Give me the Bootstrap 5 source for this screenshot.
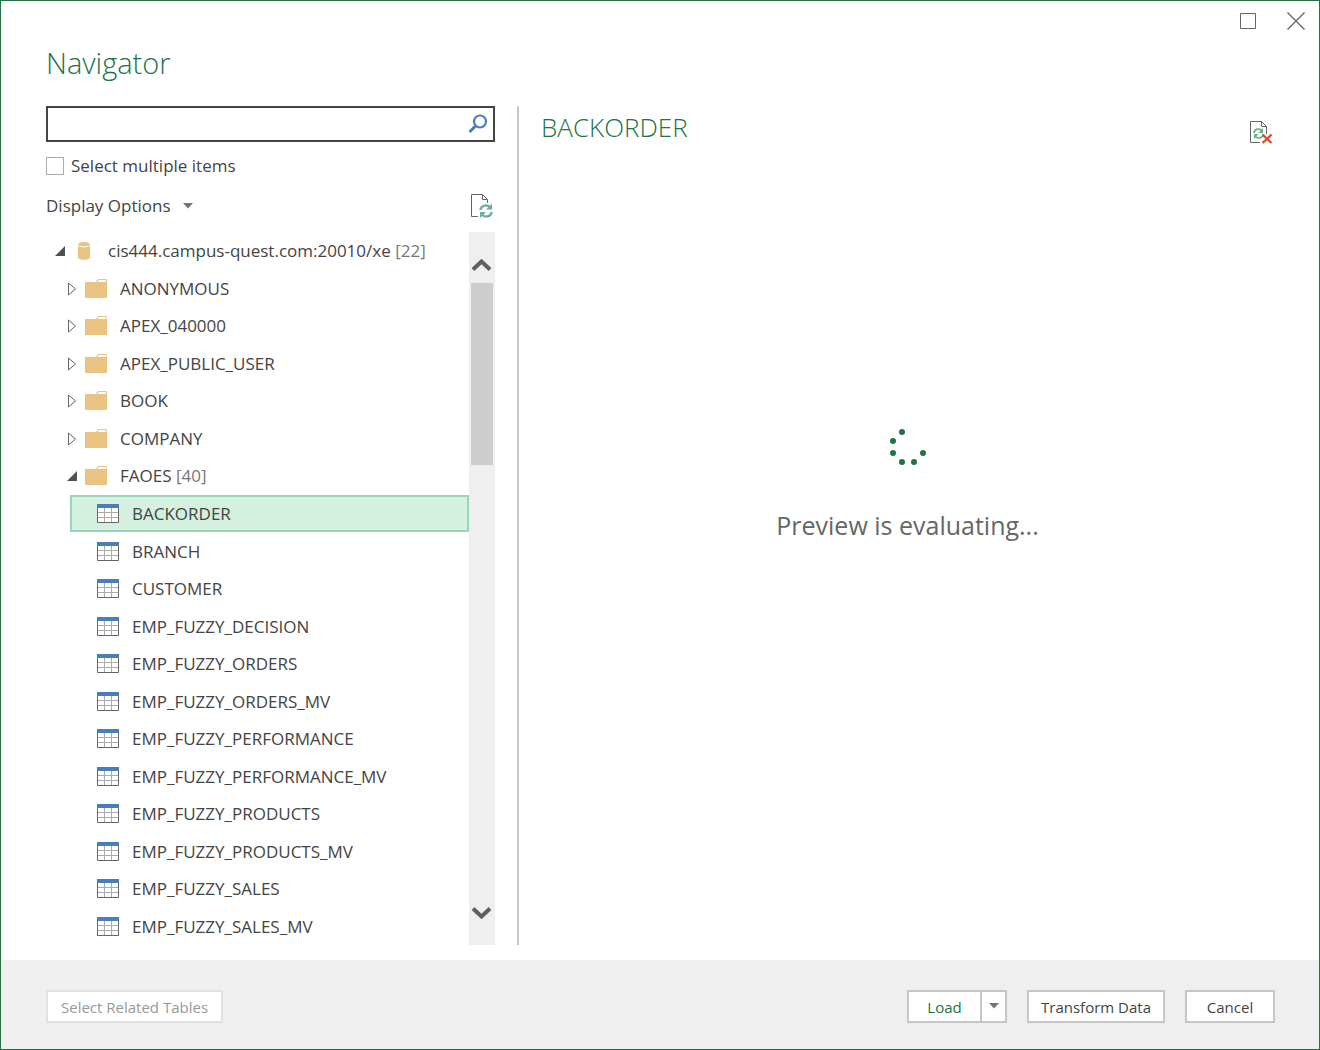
<!DOCTYPE html>
<html lang="en">
<head>
<meta charset="utf-8">
<meta name="viewport" content="width=device-width, initial-scale=1">
<title>Navigator</title>
<link href="https://cdn.jsdelivr.net/npm/bootstrap@5.3.0/dist/css/bootstrap.min.css" rel="stylesheet">
<style>
  body { font-family: "Open Sans", "Noto Sans", sans-serif; font-size: 17px; line-height: 24px; color: #444; background: #fff; }
  svg { display: block; flex: none; }
  .dialog { min-height: 100vh; border: 1px solid #217346; }
  .titlebar { height: 40px; padding-right: 13px; gap: 29px; }
  .heading { font-size: 29px; line-height: 36px; font-weight: 300; color: #217346; padding: 4px 45px 0; height: 65px; }
  .panes { padding: 0 45px 15px; }
  .side { width: 449px; }
  .search { height: 36px; border: 2px solid #444; padding-right: 5px; }
  .search input { min-width: 0; }
  .bare { border: 0; background: none; padding: 0; color: inherit; }
  .multi { gap: 7px; margin-top: 12px; }
  .multi input { appearance: none; width: 18px; height: 18px; border: 1px solid #ababab; background: #fff; margin: 0; }
  .options { margin: 16px 2px 14px 0; }
  .options .bare { gap: 12px; }
  .tree { min-width: 0; }
  .tree li { border: 2px solid transparent; padding: 1px 0 0 7px; min-height: 34px; flex: 1 1 0; cursor: default; }
  .tree .lv1 { margin-left: 12px; }
  .tree .lv2 { margin-left: 24px; }
  .tree .picked { background: #d3f0e0; border-color: #9bd5b7; }
  .twist { width: 12px; margin-right: 6px; }
  .pic { width: 22px; height: 20px; margin-right: 13px; }
  .count { color: #777; }
  .scroller { width: 26px; background: #efefef; padding: 25px 2px 24px; }
  .thumb { background: #cdcdcd; height: 182px; margin-top: 11px; }
  .preview { border-left: 2px solid #c6c6c6; margin-left: 22px; padding-left: 22px; }
  .preview-title { font-size: 26px; line-height: 36px; font-weight: 300; color: #217346; margin-top: 3px; }
  .stop { margin-top: 14px; }
  .state { padding-top: 283px; font-size: 25px; line-height: 36px; color: #666; }
  .state p { margin-top: 41px; }
  .actions { background: #efefef; padding: 30px 44px 26px 45px; font-size: 15px; gap: 20px; }
  .push { height: 33px; border: 2px solid #c6c6c6; background: #fff; color: #444; padding: 1px 13px 0; line-height: 28px; }
  .push:disabled { border-color: #e1e1e1; color: #999; }
  .go { color: #217346; width: 75px; }
  .drop { width: 27px; margin-left: -2px; padding: 0 0 2px; }
  .wide { width: 138px; padding: 1px 0 0; }
  .slim { width: 90px; }
</style>
<script src="https://cdn.jsdelivr.net/npm/bootstrap@5.3.0/dist/js/bootstrap.bundle.min.js"></script>
</head>
<body>
<svg width="0" height="0" class="position-absolute" aria-hidden="true">
  <symbol id="shut" viewBox="0 0 12 14"><path d="M1.500 1v12L8.500 7z" fill="#fff" stroke="#666"/></symbol>
  <symbol id="open" viewBox="0 0 12 14"><path d="M10 2v10H0z" fill="#505050"/></symbol>
  <symbol id="folder" viewBox="0 0 22 20"><path d="M0 3h11l2-3h7.500q1.500 0 1.500 1.500V19H0z" fill="#eac282"/><path d="M12.500 3l1.200-2H20q1 0 1 1v1z" fill="#fff"/></symbol>
  <symbol id="table" viewBox="0 0 22 20"><path d="M.5.500h21v18H.5z" fill="#fff" stroke="#666"/><path d="M7.500 4v14M14.500 4v14M1 8.500h20M1 13.500h20" stroke="#ababab"/><path d="M0 0h22v4H0z" fill="#4a7ebb"/></symbol>
  <symbol id="db" viewBox="0 0 22 20"><path d="M5 3.500v13c0 3 12 3 12 0v-13z" fill="#eac282"/><ellipse cx="11" cy="3.500" rx="6" ry="2.500" fill="#eac282"/><path d="M5 4c1 2.500 11 2.500 12 0" fill="none" stroke="#fff"/></symbol>
  <symbol id="down" viewBox="0 0 10 6"><path d="M0 0h10L5 5.500z" fill="#737373"/></symbol>
</svg>

<div class="dialog d-flex flex-column">
  <header>
    <div class="titlebar d-flex justify-content-end align-items-center">
      <button class="bare" aria-label="Maximize"><svg width="18" height="18"><path d="M1.500 1.500h15v15h-15z" fill="none" stroke="#666"/></svg></button>
      <button class="bare" aria-label="Close"><svg width="20" height="20"><path d="M1.500 1.500l17 17M18.500 1.500l-17 17" stroke="#666" stroke-width="1.300"/></svg></button>
    </div>
    <h1 class="heading m-0">Navigator</h1>
  </header>

  <main class="panes d-flex flex-grow-1">
    <section class="side d-flex flex-column flex-shrink-0">
      <div class="search d-flex align-items-center">
        <input type="text" class="bare flex-grow-1 h-100" aria-label="Search">
        <button class="bare" aria-label="Find"><svg width="20" height="20"><circle cx="12" cy="7.500" r="6" fill="none" stroke="#4a7ebb" stroke-width="2.200"/><path d="M7.500 12L1.500 18" stroke="#4a7ebb" stroke-width="3"/></svg></button>
      </div>
      <label class="multi d-flex align-items-center"><input type="checkbox">Select multiple items</label>
      <div class="options d-flex justify-content-between align-items-center">
        <button class="bare d-flex align-items-center">Display Options <svg width="10" height="6"><use href="#down"/></svg></button>
        <button class="bare" aria-label="Refresh">
          <svg width="22" height="24" fill="none"><path d="M7 22.500H.5V.500h11l5 5V9M11.500.500v5h5" stroke="#666"/><path d="M9.300 16c.8-5 7-6 10-2.500M20.700 18c-.8 5-7 6-10 2.500" stroke="#6fae95" stroke-width="2.200"/><path d="M21 9.500v6h-6zM9 24v-6h6z" fill="#6fae95"/></svg>
        </button>
      </div>
      <div class="d-flex flex-grow-1">
        <ul class="tree list-unstyled d-flex flex-column flex-grow-1 m-0" role="tree" aria-label="Data sources">
          <li role="treeitem" class="d-flex align-items-center"><svg class="twist" height="14"><use href="#open"/></svg><svg class="pic"><use href="#db"/></svg><span>cis444.campus-quest.com:20010/xe <span class="count">[22]</span></span></li>
          <li role="treeitem" class="lv1 d-flex align-items-center"><svg class="twist" height="14"><use href="#shut"/></svg><svg class="pic"><use href="#folder"/></svg>ANONYMOUS</li>
          <li role="treeitem" class="lv1 d-flex align-items-center"><svg class="twist" height="14"><use href="#shut"/></svg><svg class="pic"><use href="#folder"/></svg>APEX_040000</li>
          <li role="treeitem" class="lv1 d-flex align-items-center"><svg class="twist" height="14"><use href="#shut"/></svg><svg class="pic"><use href="#folder"/></svg>APEX_PUBLIC_USER</li>
          <li role="treeitem" class="lv1 d-flex align-items-center"><svg class="twist" height="14"><use href="#shut"/></svg><svg class="pic"><use href="#folder"/></svg>BOOK</li>
          <li role="treeitem" class="lv1 d-flex align-items-center"><svg class="twist" height="14"><use href="#shut"/></svg><svg class="pic"><use href="#folder"/></svg>COMPANY</li>
          <li role="treeitem" class="lv1 d-flex align-items-center"><svg class="twist" height="14"><use href="#open"/></svg><svg class="pic"><use href="#folder"/></svg><span>FAOES <span class="count">[40]</span></span></li>
          <li role="treeitem" aria-selected="true" class="lv2 picked d-flex align-items-center"><span class="twist"></span><svg class="pic"><use href="#table"/></svg>BACKORDER</li>
          <li role="treeitem" class="lv2 d-flex align-items-center"><span class="twist"></span><svg class="pic"><use href="#table"/></svg>BRANCH</li>
          <li role="treeitem" class="lv2 d-flex align-items-center"><span class="twist"></span><svg class="pic"><use href="#table"/></svg>CUSTOMER</li>
          <li role="treeitem" class="lv2 d-flex align-items-center"><span class="twist"></span><svg class="pic"><use href="#table"/></svg>EMP_FUZZY_DECISION</li>
          <li role="treeitem" class="lv2 d-flex align-items-center"><span class="twist"></span><svg class="pic"><use href="#table"/></svg>EMP_FUZZY_ORDERS</li>
          <li role="treeitem" class="lv2 d-flex align-items-center"><span class="twist"></span><svg class="pic"><use href="#table"/></svg>EMP_FUZZY_ORDERS_MV</li>
          <li role="treeitem" class="lv2 d-flex align-items-center"><span class="twist"></span><svg class="pic"><use href="#table"/></svg>EMP_FUZZY_PERFORMANCE</li>
          <li role="treeitem" class="lv2 d-flex align-items-center"><span class="twist"></span><svg class="pic"><use href="#table"/></svg>EMP_FUZZY_PERFORMANCE_MV</li>
          <li role="treeitem" class="lv2 d-flex align-items-center"><span class="twist"></span><svg class="pic"><use href="#table"/></svg>EMP_FUZZY_PRODUCTS</li>
          <li role="treeitem" class="lv2 d-flex align-items-center"><span class="twist"></span><svg class="pic"><use href="#table"/></svg>EMP_FUZZY_PRODUCTS_MV</li>
          <li role="treeitem" class="lv2 d-flex align-items-center"><span class="twist"></span><svg class="pic"><use href="#table"/></svg>EMP_FUZZY_SALES</li>
          <li role="treeitem" class="lv2 d-flex align-items-center"><span class="twist"></span><svg class="pic"><use href="#table"/></svg>EMP_FUZZY_SALES_MV</li>
        </ul>
        <div class="scroller d-flex flex-column flex-shrink-0">
          <button class="bare" aria-label="Scroll up"><svg width="22" height="15"><path d="M2 12.500l8.500-8 8.500 8" fill="none" stroke="#606060" stroke-width="4"/></svg></button>
          <div class="thumb"></div>
          <button class="bare mt-auto" aria-label="Scroll down"><svg width="22" height="15"><path d="M2 2.500l8.500 8 8.500-8" fill="none" stroke="#606060" stroke-width="4"/></svg></button>
        </div>
      </div>
    </section>

    <section class="preview flex-grow-1">
      <div class="d-flex justify-content-between align-items-start">
        <h2 class="preview-title mb-0">BACKORDER</h2>
        <button class="bare stop" aria-label="Cancel refresh">
          <svg width="24" height="24" fill="none"><path d="M10 22.500H.5V1.500h11l5 5V14M11.500 1.500v5h5" stroke="#666"/><path d="M4 13c.5-4.500 6-5 8.500-2M13.500 14c-.5 4.500-6 5-8.500 2" stroke="#6fae95" stroke-width="1.800"/><path d="M13 8v5H8.500zM4 19v-5h4.500z" fill="#6fae95"/><path d="M12.500 14.500l9 8.500M21.500 14.500l-9 8.500" stroke="#d94f2b" stroke-width="2.400"/></svg>
        </button>
      </div>
      <div class="state text-center" role="status">
        <svg class="mx-auto" width="38" height="38" fill="#217346"><circle cx="13" cy="4" r="3"/><circle cx="4" cy="13" r="3"/><circle cx="4" cy="25" r="3"/><circle cx="13" cy="34" r="3"/><circle cx="25" cy="34" r="3"/><circle cx="34" cy="25" r="3"/></svg>
        <p class="mb-0">Preview is evaluating...</p>
      </div>
    </section>
  </main>

  <footer class="actions d-flex">
    <button class="push me-auto" disabled>Select Related Tables</button>
    <div class="d-flex">
      <button class="push go">Load</button>
      <button class="push drop" aria-label="Load options"><svg class="mx-auto" width="10" height="6"><use href="#down"/></svg></button>
    </div>
    <button class="push wide">Transform Data</button>
    <button class="push slim">Cancel</button>
  </footer>
</div>
</body>
</html>
